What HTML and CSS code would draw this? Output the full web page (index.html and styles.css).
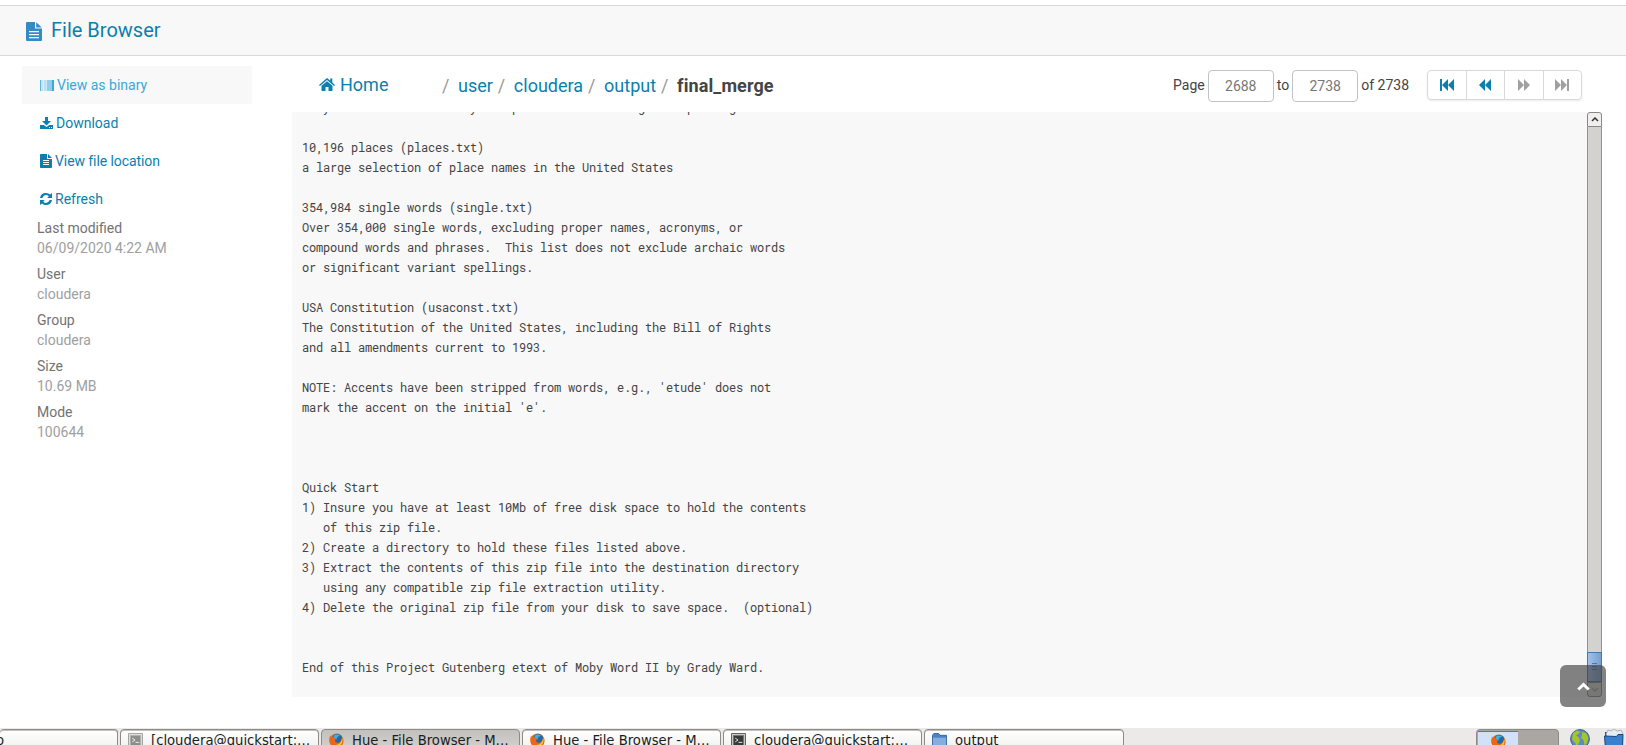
FILE: index.html
```html
<!DOCTYPE html>
<html lang="en">
<head>
<meta charset="utf-8">
<title>Hue - File Browser</title>
<link rel="stylesheet" href="styles.css">
</head>
<body>
<svg class="defs" width="0" height="0">
  <symbol id="file" viewBox="0 0 12 14"><path fill-rule="evenodd" d="M.7 0H7v4.3q0 .7.7.7H12v8.3q0 .7-.7.7H.7Q0 14 0 13.3V.7Q0 0 .7 0zM8 0l4 4H8zM3 6v1h6V6zm0 2v1h6V8zm0 2v1h6v-1z"/></symbol>
  <symbol id="firefox" viewBox="0 0 16 16"><circle cx="8" cy="8" r="7.5" fill="#e8751a"/><circle cx="8.6" cy="6.4" r="5.6" fill="#2369a8"/><path d="M5 3q3-3 7 0l-3 1-1 3-3-1z" fill="#3eb1dc"/><path d="M1 3q.5 1 2 1.2Q5 4 6 5.4L8 6 6.400 7.400Q6 10 9 10.500 13 10.500 14 5q3 5-1 9-5 3.500-10 0Q-1 10 1 3z" fill="#e9661c"/><path d="M14 5q1.500 5-2 8-4 2-7 0 8 0 9-8z" fill="#fcc52d"/></symbol>
  <symbol id="term" viewBox="0 0 16 16"><path d="M.5.500h15v15H.5z" fill="#d5d6d2" stroke="#555753"/><path d="M2.500 2.500h11v11h-11z" fill="#363a38" stroke="#777"/><path d="M4.500 5.500l3 2-3 2M8 10h4" fill="none" stroke="#eee"/></symbol>
</svg>
<header class="topbar">
  <svg class="title-icon" viewBox="0 0 16 19"><path fill-rule="evenodd" d="M1 0h8v6.500h7V18q0 1-1 1H1q-1 0-1-1V1Q0 0 1 0zM10.200.300L15.700 5.500H10.200zM3 9v1.300h10V9zm0 3v1.300h10V12zm0 3v1.300h10V15z"/></svg>
  <span class="title">File Browser</span>
</header>
<div class="main">
  <aside class="sidebar">
    <a class="nav active"><svg width="14" height="11" viewBox="0 0 14 11"><path fill="#8fcfec" d="M0 0h1.500v11H0zM2.500 0h.7v11h-.7zM4 0h.6v11H4zM5.400 0h1v11h-1zM7 0h5v11H7z"/><path d="M12 0h2v11h-2zM0 0h.6v11H0z"/></svg><span>View as binary</span></a>
    <a class="nav"><svg width="13" height="12" viewBox="0 0 13 12"><path fill-rule="evenodd" d="M5 0h3v4h3L6.500 8.500 2 4h3zM0 8h3.800L6.500 10 9.200 8H13v4H0zm9 2v1h1v-1zm2 0v1h1v-1z"/></svg><span>Download</span></a>
    <a class="nav"><svg width="12" height="14"><use href="#file"/></svg><span class="tight">View file location</span></a>
    <a class="nav"><svg width="12" height="12" viewBox="0 0 12 12"><path d="M0 5Q.8 0 6 0q2.300 0 4 1.600L12 0v5H7.300l1.500-1.700Q6 .900 3.500 3.200q-.7.800-1 1.800zM12 7q-.8 5-6 5-2.300 0-4-1.600L0 12V7h4.700L3.200 8.700q2.800 2.400 5.300.1.700-.8 1-1.800z"/></svg><span>Refresh</span></a>
    <dl class="meta">
      <dt>Last modified</dt><dd>06/09/2020 4:22 AM</dd>
      <dt>User</dt><dd>cloudera</dd>
      <dt>Group</dt><dd>cloudera</dd>
      <dt>Size</dt><dd>10.69 MB</dd>
      <dt>Mode</dt><dd>100644</dd>
    </dl>
  </aside>
  <section class="content">
    <div class="toolbar">
      <a class="home"><svg width="16" height="13" viewBox="0 0 16 13"><path d="M8 0l3.300 2.800V.600h2v3.900L16 6.900l-.9 1L8 2 .9 7.900 0 6.900zM8 3.200l5.500 4.600V12.300q0 .7-.7.700H9.500V9h-3v4H3.200q-.7 0-.7-.7V7.800z"/></svg><span>Home</span></a>
      <nav class="crumbs"><i>/</i><a>user</a><i>/</i><a>cloudera</a><i>/</i><a>output</a><i>/</i><b>final_merge</b></nav>
      <div class="pager">
        <span class="lbl">Page</span><span class="num">2688</span><span class="lbl">to</span><span class="num">2738</span><span class="lbl">of 2738</span>
        <div class="group">
          <span><svg width="14" height="12" viewBox="0 0 14 12"><path d="M0 0h2v12H0zM8 0v12L2 6zM14 0v12L8 6z"/></svg></span>
          <span><svg width="12" height="12" viewBox="0 0 12 12"><path d="M6 0v12L0 6zM12 0v12L6 6z"/></svg></span>
          <span class="off"><svg width="12" height="12" viewBox="0 0 12 12"><path d="M0 0l6 6-6 6zM6 0l6 6-6 6z"/></svg></span>
          <span class="off"><svg width="14" height="12" viewBox="0 0 14 12"><path d="M0 0l6 6-6 6zM6 0l6 6-6 6zM12 0h2v12h-2z"/></svg></span>
        </div>
      </div>
    </div>
    <div class="viewer">
<pre class="text">Many of the most commonly misspelled words in English-speaking

10,196 places (places.txt)
a large selection of place names in the United States

354,984 single words (single.txt)
Over 354,000 single words, excluding proper names, acronyms, or
compound words and phrases.  This list does not exclude archaic words
or significant variant spellings.

USA Constitution (usaconst.txt)
The Constitution of the United States, including the Bill of Rights
and all amendments current to 1993.

NOTE: Accents have been stripped from words, e.g., 'etude' does not
mark the accent on the initial 'e'.



Quick Start
1) Insure you have at least 10Mb of free disk space to hold the contents
   of this zip file.
2) Create a directory to hold these files listed above.
3) Extract the contents of this zip file into the destination directory
   using any compatible zip file extraction utility.
4) Delete the original zip file from your disk to save space.  (optional)


End of this Project Gutenberg etext of Moby Word II by Grady Ward.</pre>
      <div class="scrollbar">
        <div class="sb-btn up"><svg width="8" height="5" viewBox="0 0 8 5"><path d="M1 4l3-3 3 3"/></svg></div>
        <div class="track"></div>
        <div class="thumb"></div>
        <div class="sb-btn down"><svg width="8" height="5" viewBox="0 0 8 5"><path d="M1 1l3 3 3-3"/></svg></div>
      </div>
    </div>
  </section>
</div>
<div class="to-top"><svg width="13" height="9" viewBox="0 0 13 9"><path d="M1.300 7.500l5.200-5 5.200 5"/></svg></div>
<footer class="taskbar">
  <div class="task first"><span>o</span></div>
  <div class="task"><svg class="faded"><use href="#term"/></svg><span>[cloudera@quickstart:…</span></div>
  <div class="task pressed"><svg><use href="#firefox"/></svg><span>Hue - File Browser - M…</span></div>
  <div class="task"><svg><use href="#firefox"/></svg><span>Hue - File Browser - M…</span></div>
  <div class="task"><svg><use href="#term"/></svg><span>cloudera@quickstart:…</span></div>
  <div class="task last"><svg viewBox="0 0 16 16"><path d="M.5 14V2.500l1.500-2h5l1.500 2h7V15H.5z" fill="#4d83c4" stroke="#34659f"/><path d="M1 5h14v10H1z" fill="#83aede"/></svg><span>output</span></div>
  <div class="tray">
    <div class="switcher"><div class="ws"><svg width="15" height="15"><use href="#firefox"/></svg></div></div>
    <svg class="globe" width="20" height="20" viewBox="0 0 20 20"><circle cx="10" cy="10" r="9.400" fill="#5d8cc0" stroke="#3a5f8c"/><path d="M3 4l4-2.500 3 1-1 2L6 6.500l3 2 1 3-3 6-2-4-3-3zM12 3l4 1 2.500 5-2 6-2 1-1-5-2.500-2 1-3z" fill="#a6c42c"/></svg>
    <svg class="files" width="20" height="20" viewBox="0 0 20 20"><path d="M1 3h17v16H1z" fill="#1d4f94"/><path d="M2 5l2-4 3 1 3-2 3 2 4-1 2 4-2 3H3z" fill="#e9ecef" stroke="#8b98a8" stroke-width=".7"/><path d="M.5 7l12 .5 1.500-2h5L18.500 20h-17z" fill="#3b80cc" stroke="#174783"/></svg>
  </div>
</footer>
</body>
</html>
```
FILE: styles.css
```css
* { box-sizing: border-box; }
body {
  margin: 0;
  height: 745px;
  padding-top: 5px;
  overflow: hidden;
  display: flex;
  flex-direction: column;
  background: #fff;
  color: #444;
  font: 14px/20px Roboto, sans-serif;
}
svg { flex: none; fill: currentColor; }
.defs { position: absolute; }
.topbar {
  flex: none;
  height: 51px;
  display: flex;
  align-items: center;
  padding: 0 26px;
  background: #f8f8f8;
  border-top: 1px solid #d8d8d8;
  border-bottom: 1px solid #d8d8d8;
  color: #0b7fad;
}
.title-icon { width: 16px; height: 19px; color: #338bc6; margin-top: 1px; }
.title { margin: -1px 0 0 9px; font-size: 20px; }
.main { display: flex; height: 672px; }
.sidebar { width: 252px; padding: 10px 0 0 22px; }
.nav { display: flex; align-items: center; height: 38px; padding-left: 18px; color: #0b7fad; }
.nav span { margin: -1px 0 0 3px; }
.nav .tight { letter-spacing: -.08px; }
.active { background: #f8f8f8; color: #38a9d8; }
.meta { margin: 0; padding-left: 15px; }
.meta dt { color: #737373; }
.meta dd { margin: 0 0 6px; color: #a0a0a0; }
.content { width: 1310px; margin-left: 40px; }
.toolbar { display: flex; height: 56px; padding: 13px 20px 0 27px; line-height: 30px; }
.home { display: flex; align-items: center; height: 30px; width: 123px; margin-top: 1px; color: #0b7fad; font-size: 18px; }
.home svg { margin-top: -2px; }
.home span { margin-left: 5px; }
.crumbs { display: flex; height: 30px; margin-top: 2px; font-size: 18px; color: #0b7fad; }
.crumbs i { width: 16px; color: #999; font-style: normal; }
.crumbs a { margin-right: 5px; }
.crumbs b { color: #444; letter-spacing: .1px; }
.pager { display: flex; margin-left: auto; height: 34px; color: #444; }
.lbl { padding-top: 1px; }
.num {
  width: 66px;
  height: 32px;
  margin: 1px 3px 0;
  border: 1px solid #c3c3c3;
  border-radius: 4px;
  color: #777;
  text-align: center;
}
.group {
  display: flex;
  width: 155px;
  height: 30px;
  margin: 1px 0 0 18px;
  border: 1px solid #d9d9d9;
  border-radius: 4px;
  box-shadow: 0 1px 2px rgba(0,0,0,.08);
  color: #0b7fad;
}
.group span { flex: 1; display: flex; align-items: center; justify-content: center; }
.group span + span { border-left: 1px solid #d9d9d9; }
.group .off { color: #a0a0a0; }
.viewer { display: flex; height: 585px; background: #f8f8f8; overflow: hidden; }
.text {
  flex: 1;
  margin: -15px 0 0;
  padding-left: 10px;
  color: #444;
  font: 12px/20px "Roboto Mono", "Liberation Mono", monospace;
  letter-spacing: -.2px;
}
.scrollbar { display: flex; flex-direction: column; width: 15px; height: 585px; }
.sb-btn { display: flex; height: 15px; align-items: center; justify-content: center; border: 1px solid #8a8884; background: #f0efed; }
.sb-btn path { fill: none; stroke: #333; stroke-width: 1.5; }
.up { border-radius: 3px 3px 0 0; }
.down { border-radius: 0 0 3px 3px; background: #dddcd9; }
.down path { stroke: #aaa; }
.track { flex: 1; border: solid #94928f; border-width: 0 1px; background: #d4d2cf; }
.thumb {
  height: 30px;
  border: 1px solid #4976ad;
  background: linear-gradient(#4b77ac, #4b77ac) 4px 10px/5px 1px no-repeat, linear-gradient(#4b77ac, #4b77ac) 4px 13px/5px 1px no-repeat, linear-gradient(#4b77ac, #4b77ac) 4px 16px/5px 1px no-repeat, linear-gradient(90deg, #a1c1e8, #779fd0);
}
.to-top {
  position: absolute;
  left: 1560px;
  top: 665px;
  width: 46px;
  height: 42px;
  display: flex;
  align-items: center;
  justify-content: center;
  border-radius: 6px;
  background: rgba(65,65,65,.65);
}
.to-top path { fill: none; stroke: #fff; stroke-width: 3; }
.taskbar {
  display: flex;
  gap: 2px;
  height: 17px;
  padding-top: 1px;
  overflow: hidden;
  background: #ebeae8;
  color: #1c1c1c;
  font: 14.67px/19px "DejaVu Sans Condensed", "DejaVu Sans", sans-serif;
}
.task {
  flex: none;
  display: flex;
  width: 199px;
  height: 25px;
  padding-left: 7px;
  border: 1px solid #8e8a86;
  border-radius: 4px;
  background: linear-gradient(#fff, #ededeb);
  box-shadow: inset 0 1px #c4c2c0;
  font-stretch: condensed;
  white-space: nowrap;
}
.task svg { width: 15px; height: 15px; margin: 3px 8px 0 0; }
.task .faded { opacity: .55; }
.first { width: 118px; padding: 0; border-left: 0; }
.first span { margin-left: -4px; }
.last { width: 200px; }
.pressed { background: linear-gradient(#c3c1be, #d6d4d1); line-height: 20px; }
.tray { display: flex; margin-left: auto; padding-right: 2px; }
.switcher { width: 83px; height: 25px; padding: 1px; border: 1px solid #8e8a86; border-radius: 4px; background: #aaa6a2; }
.ws { width: 40px; height: 20px; display: flex; justify-content: center; padding-top: 2px; background: #d1e2f8; border-top: 1px solid #4a78b5; }
.globe { margin-left: 11px; }
.files { margin-left: 14px; }
```
